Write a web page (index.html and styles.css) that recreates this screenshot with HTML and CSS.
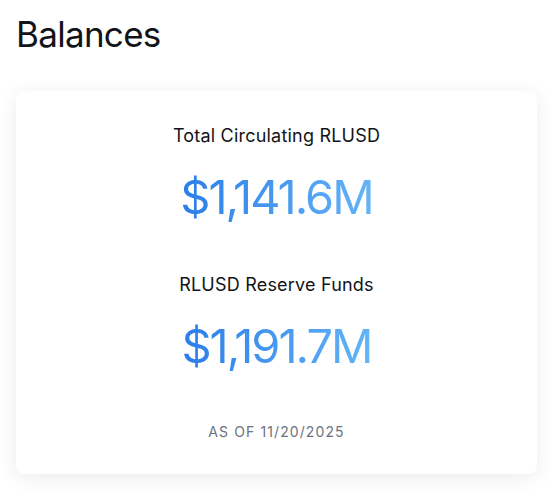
FILE: index.html
```html
<!DOCTYPE html>
<html lang="en">
<head>
<meta charset="utf-8">
<title>Balances</title>
<link rel="stylesheet" href="styles.css">
</head>
<body>
<main class="page">
  <h1 class="title">Balances</h1>
  <section class="card">
    <div class="stat">
      <div class="stat-label">Total Circulating RLUSD</div>
      <div class="stat-value">$1,141.6M</div>
    </div>
    <div class="stat">
      <div class="stat-label">RLUSD Reserve Funds</div>
      <div class="stat-value">$1,191.7M</div>
    </div>
    <div class="as-of">AS OF 11/20/2025</div>
  </section>
</main>
</body>
</html>
```

FILE: styles.css
```css
* { box-sizing: border-box; }
html, body { margin: 0; background: #ffffff; }
body {
  font-family: Inter, "Noto Sans", "Liberation Sans", sans-serif;
  color: #111418;
}
.page {
  padding: 12px 17px 16px 16px;
}
.title {
  margin: 0;
  font-size: 35px;
  line-height: 44px;
  font-weight: 400;
  letter-spacing: -0.7px;
  color: #111418;
}
.card {
  margin-top: 35px;
  background: #ffffff;
  border-radius: 8px;
  box-shadow: 0 4px 20px rgba(0, 0, 0, 0.08);
  padding: 33px 16px 32px;
  display: flex;
  flex-direction: column;
  align-items: center;
  gap: 48px;
}
.stat {
  display: flex;
  flex-direction: column;
  align-items: center;
  gap: 21px;
}
.stat-label {
  font-size: 18px;
  line-height: 24px;
  letter-spacing: 0.2px;
  color: #111418;
}
.stat-value {
  font-size: 47px;
  line-height: 56px;
  letter-spacing: -2px;
  background: linear-gradient(90deg, #2b7de9 0%, #64b4f8 100%);
  -webkit-background-clip: text;
  background-clip: text;
  color: transparent;
}
.as-of {
  font-size: 14px;
  line-height: 20px;
  letter-spacing: 1.1px;
  color: #6b7280;
}
```
